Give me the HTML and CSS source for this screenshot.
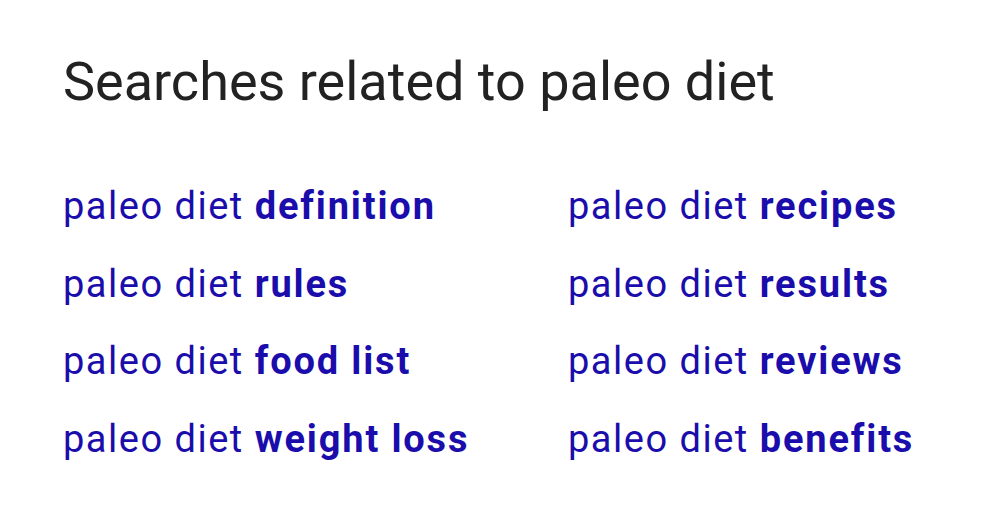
FILE: index.html
```html
<!DOCTYPE html>
<html>
<head>
<meta charset="utf-8">
<link rel="stylesheet" href="styles.css">
</head>
<body>
<div class="related">
  <h2 class="title">Searches related to paleo diet</h2>
  <div class="grid">
    <a class="link" href="#">paleo diet <b>definition</b></a>
    <a class="link" href="#">paleo diet <b>recipes</b></a>
    <a class="link" href="#">paleo diet <b>rules</b></a>
    <a class="link" href="#">paleo diet <b>results</b></a>
    <a class="link" href="#">paleo diet <b>food list</b></a>
    <a class="link" href="#">paleo diet <b>reviews</b></a>
    <a class="link" href="#">paleo diet <b>weight loss</b></a>
    <a class="link" href="#">paleo diet <b>benefits</b></a>
  </div>
</div>
</body>
</html>
```
FILE: styles.css
```css
html, body {
  margin: 0;
  padding: 0;
  background: #fff;
}
.related {
  padding: 48px 0 0 63px;
  font-family: Roboto, "Liberation Sans", sans-serif;
}
.title {
  margin: 0;
  font-size: 54px;
  font-weight: 400;
  line-height: 68px;
  color: #222;
}
.grid {
  display: grid;
  grid-template-columns: 505px 400px;
  grid-auto-rows: 77.67px;
  margin-top: 66px;
}
.link {
  font-size: 38px;
  line-height: 48px;
  letter-spacing: 1.5px;
  color: #1a0dab;
  text-decoration: none;
}
.link b {
  font-weight: 700;
  letter-spacing: 1.85px;
}
```
